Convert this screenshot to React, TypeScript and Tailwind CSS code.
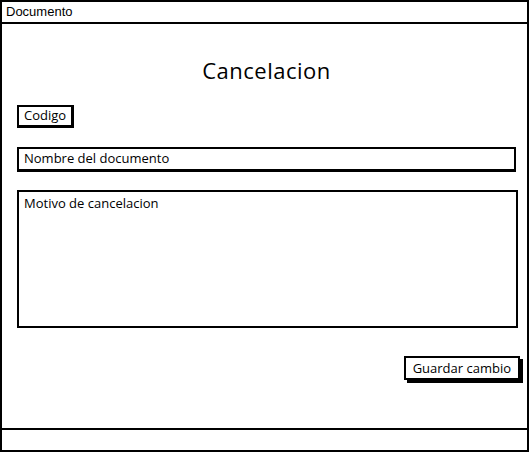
const sketch = { fontFamily: '"Open Sans", "Noto Sans", sans-serif' };

export default function App() {
  return (
    <div className="w-[529px] h-[453px] bg-white">
      <div className="flex flex-col w-[529px] h-[452px] border-2 border-black bg-white">
        <div
          className="h-[22px] border-b-2 border-black px-[4px] text-[13px] leading-[20px] text-black"
          style={{ fontFamily: '"Liberation Sans", Arial, sans-serif' }}
        >
          Documento
        </div>

        <div className="flex-1 flex flex-col pl-[15px] pr-[11px]" style={sketch}>
          <h1 className="mt-[31px] h-[30px] text-center text-[22px] leading-[30px] tracking-[0.5px] text-black">
            Cancelacion
          </h1>

          <div className="mt-[20px] self-start h-[23px] border-2 border-black border-r-[3px] border-b-[3px] px-[5px] text-[13px] leading-[17px] text-black">
            Codigo
          </div>

          <div className="mt-[19px] h-[25px] border-2 border-black border-b-[3px] px-[5px] text-[13px] leading-[19px] text-black">
            Nombre del documento
          </div>

          <div className="mt-[18px] h-[138px] mr-[-2px] border-2 border-black px-[5px] pt-[3px] text-[13px] leading-[17px] text-black">
            Motivo de cancelacion
          </div>

          <div className="mt-[28px] flex justify-end">
            <button className="h-[24px] px-[7px] mr-[-4px] border-2 border-black bg-white text-[13px] leading-[18px] text-black shadow-[3px_3px_0_0_#000]">
              Guardar cambio
            </button>
          </div>
        </div>

        <div className="h-[22px] border-t-2 border-black"></div>
      </div>
    </div>
  );
}
